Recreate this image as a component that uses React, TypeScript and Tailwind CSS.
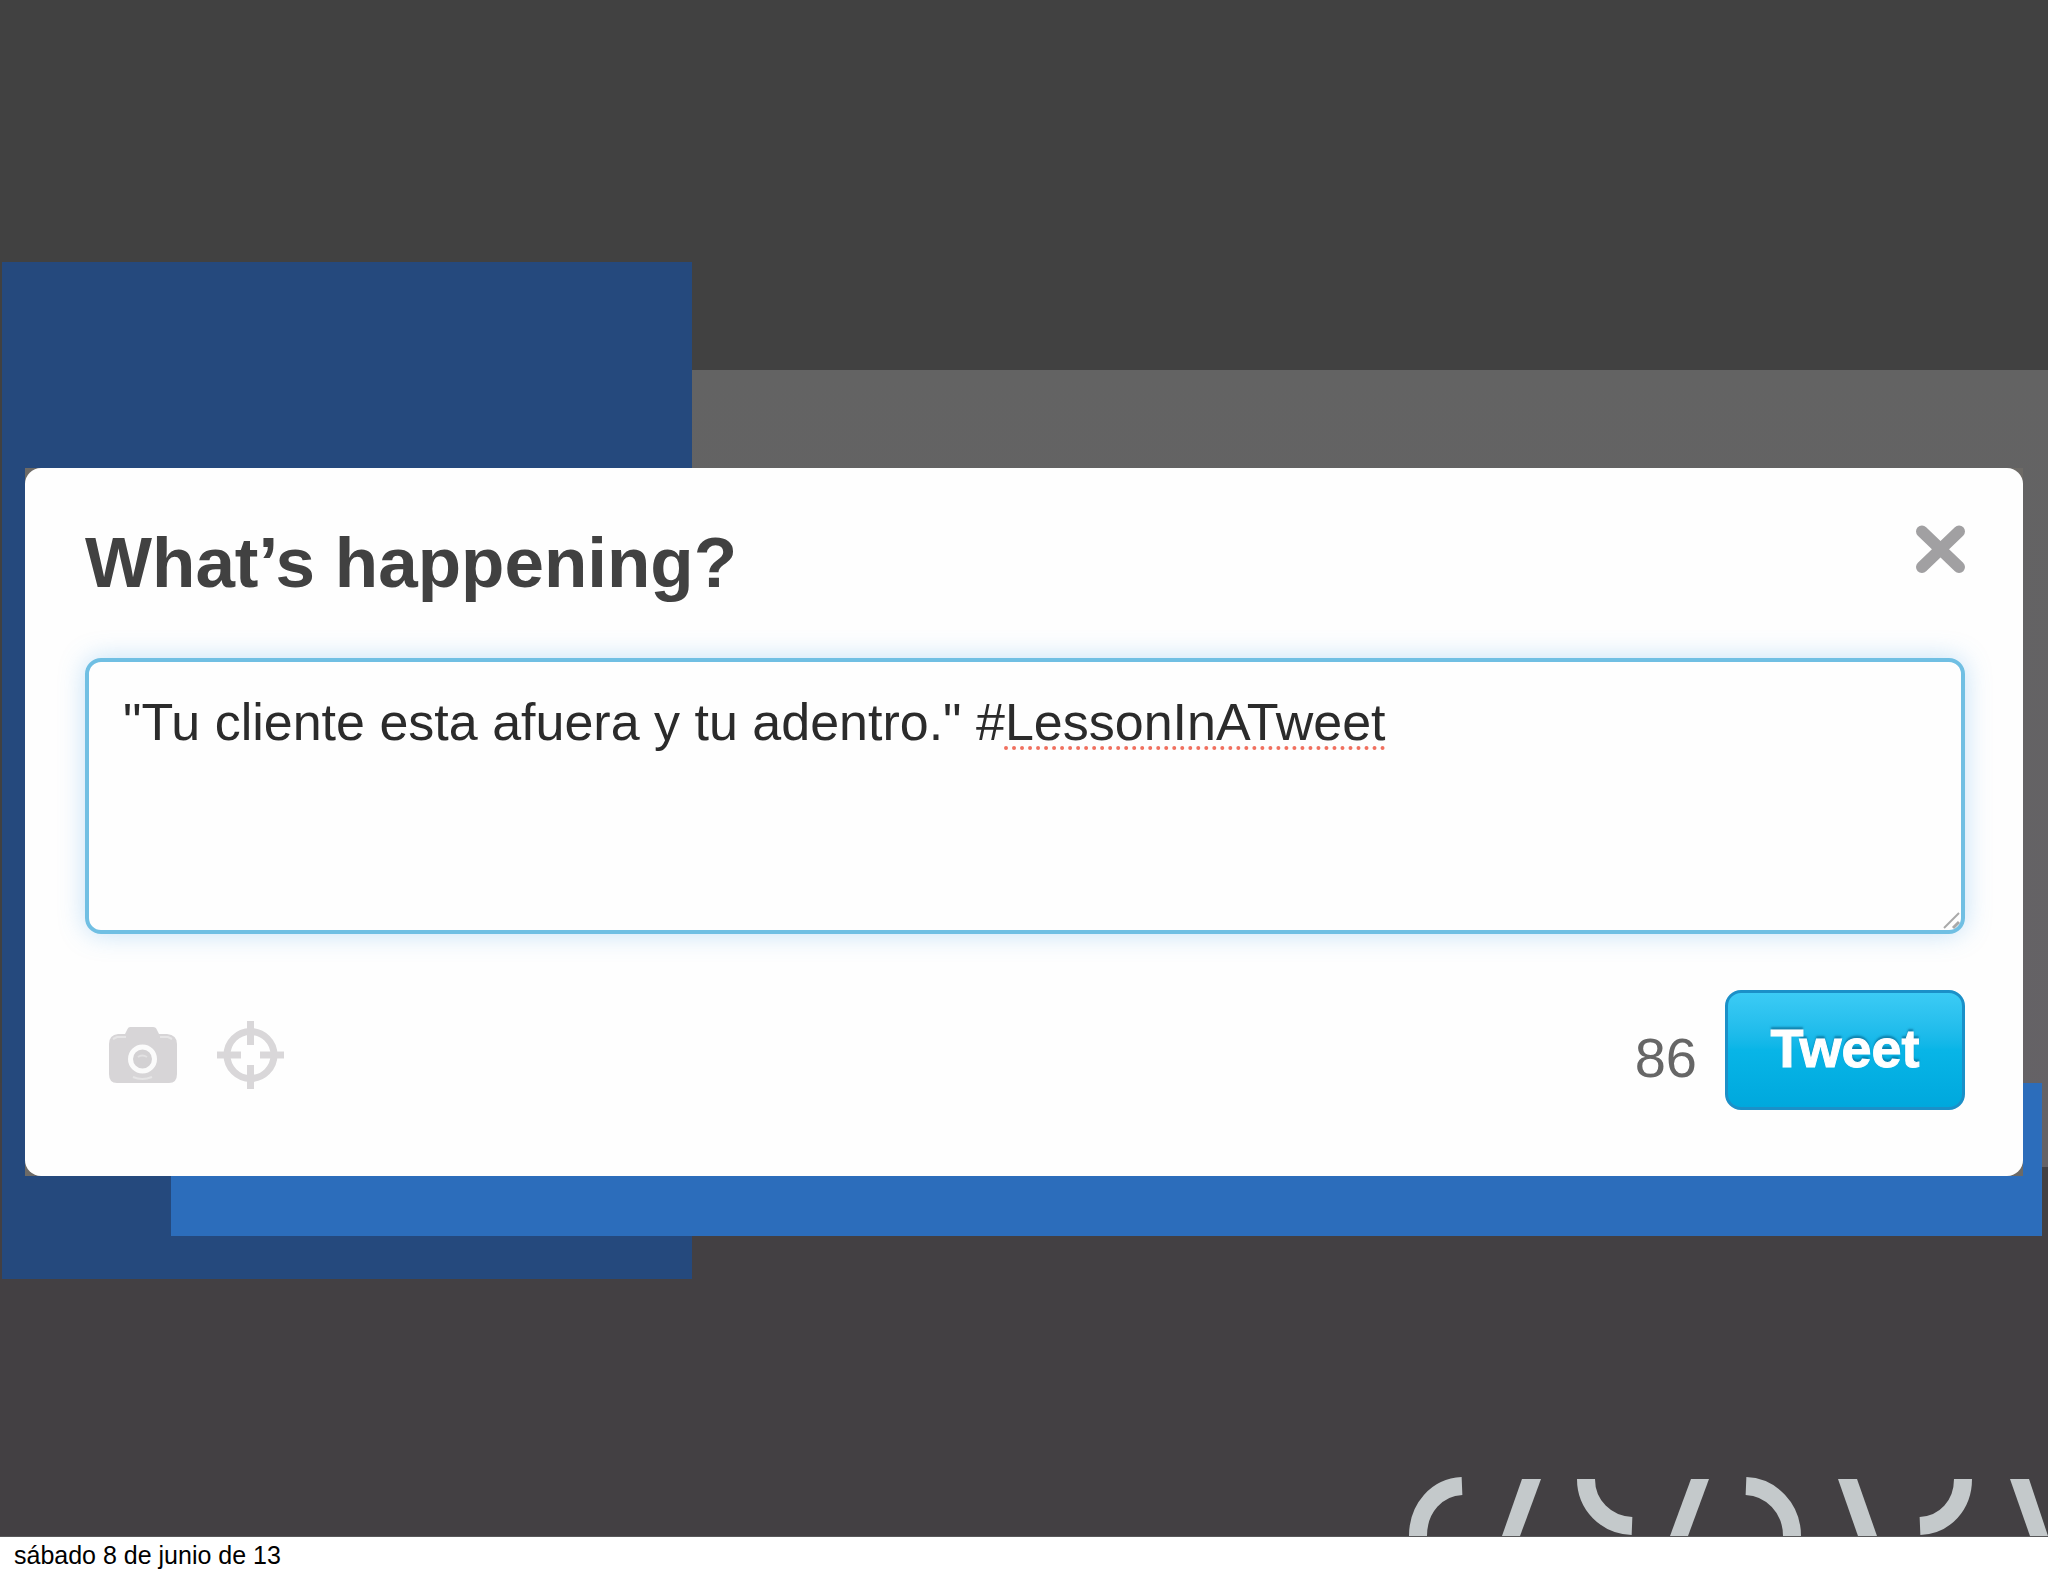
import { useState } from "react";

const DRAFT = '"Tu cliente esta afuera y tu adentro." #LessonInATweet';
const MISSPELLED = "LessonInATweet";

function CloseIcon() {
  return (
    <svg viewBox="0 0 50 48" className="w-[50px] h-12" fill="none" stroke="#a1a0a2" strokeWidth="12" strokeLinecap="round">
      <path d="M7 6.500L44 42M44 6.500L7 42" />
    </svg>
  );
}

function CameraIcon() {
  return (
    <svg viewBox="0 0 70 58" className="w-[70px] h-[58px]">
      <path
        d="M22 1H45Q48 1 49 4L51 8H59Q69 9 69 18V48Q69 57 61 57H9Q1 57 1 48V18Q1 9 10 8H17L19 4Q20 1 22 1Z"
        fill="#d7d5d7"
      />
      <circle cx="34.500" cy="33" r="12" fill="#d3d1d3" stroke="#fbfbfb" strokeWidth="5" />
      <path d="M5 13L9 11H18M52 11H60L64 13M25 51Q34 55 44 51" fill="none" stroke="#e6e5e6" strokeWidth="2" />
      <path d="M30 31Q34 28 39 31" fill="none" stroke="#e2e1e2" strokeWidth="2" />
    </svg>
  );
}

function LocationIcon() {
  return (
    <svg viewBox="0 0 70 70" className="w-[70px] h-[70px]" fill="none" stroke="#d9d7d9" strokeWidth="7">
      <circle cx="34.500" cy="35" r="23.500" />
      <path d="M34.500 1V25M34.500 45V69M1 35H25M44 35H68" />
    </svg>
  );
}

function ResizeGrip() {
  return (
    <svg
      viewBox="0 0 20 20"
      aria-hidden="true"
      className="[grid-area:1/1] self-end justify-self-end w-5 h-5 mr-[3px] mb-[3px] pointer-events-none"
      fill="none"
      stroke="#a9a9a9"
      strokeWidth="2"
    >
      <path d="M2 17L17 2" />
      <path d="M11 17L17 11" strokeWidth="3" />
    </svg>
  );
}

function PatternMark() {
  return (
    <svg viewBox="0 0 640 60" className="w-[640px] h-[60px]" aria-hidden="true">
      <g fill="none" stroke="#c4c9cb" strokeWidth="18">
        <path d="M10 60C10 32 29 11 54 10" />
        <path d="M178 3C178 29 198 49 224 50" />
        <path d="M338 10C363 11 384 32 384 60" />
        <path d="M555 3C555 29 537 49 512 50" />
      </g>
      <g fill="#c4c9cb">
        <path d="M114 3H133L112 60H94Z" />
        <path d="M283 3H301L280 60H262Z" />
        <path d="M430 3H449L469 60H450Z" />
        <path d="M602 3H621L640 60H622Z" />
      </g>
    </svg>
  );
}

function TweetField() {
  const [text, setText] = useState(DRAFT);
  const start = text.indexOf(MISSPELLED);

  return (
    <div className="grid mt-[55px]">
      {/* Spelling marks sit behind the transparent textarea */}
      <div
        aria-hidden="true"
        className="[grid-area:1/1] border-4 border-transparent pt-[30px] px-[34px] text-[52px] leading-[60px] text-transparent whitespace-pre-wrap"
      >
        {start >= 0 && (
          <>
            {text.slice(0, start)}
            <span className="underline decoration-dotted decoration-[#f0705f] decoration-4 underline-offset-[6px] [text-decoration-skip-ink:none]">
              {MISSPELLED}
            </span>
          </>
        )}
      </div>
      <textarea
        aria-labelledby="compose-title"
        spellCheck={false}
        value={text}
        onChange={(e) => setText(e.target.value)}
        className="[grid-area:1/1] block w-full h-[276px] resize-none rounded-[16px] border-4 border-[#70bfe3] bg-transparent pt-[30px] px-[34px] text-[52px] leading-[60px] text-[#2b2b2b] outline-none shadow-[0_0_26px_rgba(82,168,236,0.35)]"
      />
      <ResizeGrip />
    </div>
  );
}

function ComposeDialog() {
  return (
    <section role="dialog" aria-labelledby="compose-title" className="rounded-[16px] bg-[#fefefe] pl-[60px] pr-[58px] pt-[55px] pb-[66px]">
      <header className="flex items-start justify-between">
        <h1 id="compose-title" className="text-[71px] leading-[80px] font-bold text-[#414141]">
          What’s happening?
        </h1>
        <button type="button" aria-label="Close" className="mt-[2px] cursor-pointer">
          <CloseIcon />
        </button>
      </header>

      <TweetField />

      <div className="mt-14 flex items-center">
        <div className="flex items-center gap-[38px] pl-[23px] pt-[10px]">
          <button type="button" aria-label="Add photo" className="cursor-pointer">
            <CameraIcon />
          </button>
          <button type="button" aria-label="Add location" className="cursor-pointer">
            <LocationIcon />
          </button>
        </div>
        <div className="ml-auto flex items-center gap-7">
          <span className="pt-4 text-[56px] leading-[64px] text-[#666666]">86</span>
          <button
            type="button"
            className="w-[240px] h-[120px] pb-1 rounded-[16px] border-[3px] border-[#1b90c8] bg-linear-to-b from-[#3bcbf5] via-[#08b5e7] to-[#00a8dd] text-[54px] leading-[60px] font-bold text-white [-webkit-text-stroke:1px_white] [text-shadow:0_-3px_2px_rgba(0,80,120,0.5)] cursor-pointer"
          >
            Tweet
          </button>
        </div>
      </div>
    </section>
  );
}

export default function App() {
  return (
    <div className="min-h-screen flex flex-col bg-white font-['Liberation_Sans',Arial,sans-serif]">
      <main className="flex-1 grid grid-cols-[2px_23px_146px_521px_1fr_19px_6px] grid-rows-[262px_108px_98px_auto_84px_9px_60px_43px_1fr] bg-[#424142] border-b border-[#58585a]">
        {/* Backdrop blocks */}
        <div className="col-[1/-1] row-[1/5] bg-[#414141]" />
        <div className="col-[1/-1] row-[5/-1] bg-[#434043]" />
        <div className="col-[5/-1] row-[3/6] bg-linear-to-b from-[#636363] to-[#656266]" />
        <div className="col-[2/5] row-[2/9] bg-[#25497d]" />
        <div className="col-[4/7] row-[5/8] bg-[#2c6dbb]" />

        <div className="col-[3/6] row-[4/7] bg-[#6d6a66]">
          <ComposeDialog />
        </div>
        <div className="col-[1/-1] row-[9/10] flex items-end justify-end">
          <PatternMark />
        </div>
      </main>
      <footer className="h-[39px] pl-[14px] pt-1 text-[25px] leading-[28px] text-black">sábado 8 de junio de 13</footer>
    </div>
  );
}
